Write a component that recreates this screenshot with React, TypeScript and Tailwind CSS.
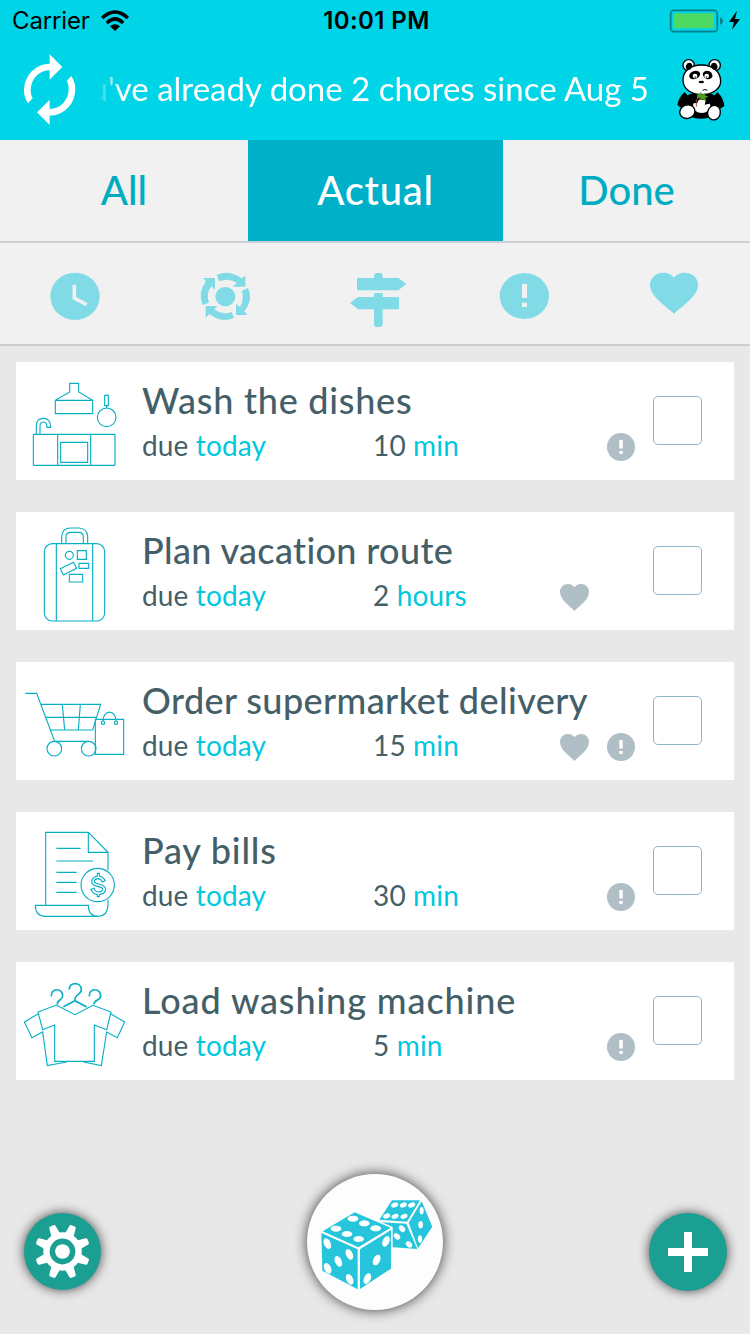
import { useState, ReactNode } from 'react'

interface Chore {
  title: string
  amount: string
  unit: string
  favorite?: boolean
  important?: boolean
  icon: ReactNode
  titleClass: string
}

const KitchenIcon = () => (
  <>
    <path d="M179 85H206V111L248 136V176H136V136L179 111ZM136 136H248" />
    <path d="M284 121H295V152H284ZM290 152V160" />
    <circle cx="290" cy="187" r="28" />
    <path d="M79 238V211Q80 190 100 190Q122 190 122 217H111Q111 201 101 201Q90 201 90 214V238" />
    <rect x="70" y="238" width="245" height="93" rx="2" />
    <path d="M143 238V331M242 238V331M152 262H233V322H152Z" />
  </>
)

const SuitcaseIcon = () => (
  <>
    <path d="M155 116V94Q157 69 182 69H206Q231 70 233 94V116" />
    <path d="M168 116V96Q168 82 182 82H206Q220 82 220 96V116" />
    <rect x="103" y="116" width="181" height="232" rx="24" />
    <path d="M139 116V348M248 116V348" />
    <circle cx="178" cy="151" r="12" />
    <path d="M202 137H229V163H202ZM207 175H236V190H207ZM178 208H218V231H178ZM151 191L190 172L200 190L160 210Z" />
  </>
)

const CartIcon = () => (
  <>
    <path d="M46 115H80L134 259H237M94 148H272L248 225H122M108 187H260M157 148L164 225M211 148L205 225" />
    <circle cx="133" cy="281" r="22" />
    <circle cx="236" cy="281" r="22" />
    <path d="M256 193H341V298H256ZM279 199C279 162 318 162 318 199" />
    <circle cx="279" cy="203" r="5" />
    <circle cx="318" cy="203" r="5" />
  </>
)

const BillIcon = () => (
  <>
    <path d="M107 301V82H235L294 142V196M235 82V142H294M294 284V301Q292 334 264 334H106Q76 334 76 301H235Q235 334 264 334" />
    <path d="M139 130H212M139 168H249M139 202H200M139 232H200M139 262H200" />
    <circle cx="263" cy="240" r="50" />
    <path d="M262 205H268V213Q281 216 286 227L277 231Q273 221 263 221Q253 222 253 229Q253 235 265 237Q287 241 287 254Q286 266 268 269V275H262V269Q248 267 243 254L252 250Q256 261 266 261Q278 260 278 253Q278 246 262 244Q244 240 245 228Q247 216 262 213Z" />
  </>
)

const ClothesIcon = () => (
  <>
    <path strokeWidth="5" d="M124 124C121 98 158 98 158 122C158 137 141 133 142 148" />
    <path strokeWidth="5" d="M178 104C176 80 214 80 214 104C213 122 193 116 195 136M160 155L195 137L230 156" />
    <path strokeWidth="5" d="M238 124C235 98 272 98 272 122C272 137 252 133 252 148" />
    <path d="M139 150L195 179L249 151L303 171L290 224L253 210V319H134V210L98 224L84 171Z" />
    <path d="M84 177L43 201L66 248L98 231L112 332L170 321M303 177L344 201L322 248L290 231L274 332L220 321" />
  </>
)

const chores: Chore[] = [
  { title: 'Wash the dishes', amount: '10', unit: 'min', important: true, icon: <KitchenIcon />, titleClass: 'tracking-[0.75px]' },
  { title: 'Plan vacation route', amount: '2', unit: 'hours', favorite: true, icon: <SuitcaseIcon />, titleClass: 'tracking-[0.35px]' },
  { title: 'Order supermarket delivery', amount: '15', unit: 'min', favorite: true, important: true, icon: <CartIcon />, titleClass: 'tracking-[0.4px]' },
  { title: 'Pay bills', amount: '30', unit: 'min', important: true, icon: <BillIcon />, titleClass: 'tracking-[0.8px]' },
  { title: 'Load washing machine', amount: '5', unit: 'min', important: true, icon: <ClothesIcon />, titleClass: 'tracking-[0.9px]' },
]

const HEART = 'M24 41C16 33 0 24 0 12C0 5 6 0 13 0C18 0 22 2 24 5C26 2 30 0 35 0C42 0 48 5 48 12C48 24 32 33 24 41Z'

function StatusBar() {
  return (
    <div className="flex h-10 items-center justify-between pt-px pl-3 pr-[9px] font-['Inter',sans-serif] text-black">
      <div className="flex w-[200px] items-center gap-[11px]">
        <span className="text-2xl tracking-[-0.15px]">Carrier</span>
        <svg className="h-[21px] w-7" viewBox="0 0 84 63">
          <path d="M0 20Q42-18 84 20L77 28Q42-6 7 28ZM14 35Q42 7 70 35L63 43Q42 22 21 43ZM27 49Q42 37 57 49L42 63Z" />
        </svg>
      </div>
      <span className="text-2xl font-semibold tracking-[0.4px]">10:01 PM</span>
      <div className="flex w-[200px] items-center justify-end">
        <svg className="h-6 w-[72px]" viewBox="507 26 216 72">
          <rect x="512" y="30" width="140" height="64" rx="10" fill="none" stroke="#067f8b" strokeWidth="5" />
          <rect x="521" y="39" width="121" height="45" rx="4" fill="#4cd964" />
          <path d="M660 50Q669 54 669 62Q669 70 660 74Z" fill="#067f8b" />
          <path d="M711 31L687 65H702L696 89L720 56H705Z" />
        </svg>
      </div>
    </div>
  )
}

function Panda() {
  return (
    <svg className="h-16 w-[50px]" viewBox="526 174 150 192">
      <ellipse cx="601" cy="316" rx="60" ry="40" />
      <path d="M552 276Q534 292 530 314Q552 338 582 312ZM650 276Q668 292 671 318Q648 340 620 312Z" />
      <ellipse cx="603" cy="319" rx="26" ry="20" fill="#fff" />
      <path d="M566 290L594 298L590 310L572 308ZM642 290L616 298L612 314L640 308Z" />
      <g stroke="#000" strokeWidth="4" fill="#fff">
        <circle cx="564" cy="196" r="17" />
        <circle cx="642" cy="196" r="17" />
        <path d="M603 195C640 195 660 218 660 244C660 268 633 284 603 284C573 284 547 268 547 240C547 214 568 195 603 195Z" />
        <ellipse cx="560" cy="335" rx="23" ry="20" transform="rotate(-20 560 335)" />
        <ellipse cx="640" cy="338" rx="19" ry="22" transform="rotate(15 640 338)" />
      </g>
      <ellipse cx="565" cy="199" rx="9" ry="11" transform="rotate(25 565 199)" />
      <ellipse cx="641" cy="199" rx="9" ry="11" transform="rotate(-25 641 199)" />
      <ellipse cx="582" cy="225" rx="17" ry="12" transform="rotate(-20 582 225)" />
      <ellipse cx="621" cy="225" rx="15" ry="12" transform="rotate(25 621 225)" />
      <circle cx="583" cy="228" r="7" fill="#fff" />
      <circle cx="618" cy="228" r="7" fill="#fff" />
      <circle cx="584" cy="231" r="2" />
      <circle cx="618" cy="231" r="2" />
      <ellipse cx="602" cy="246" rx="8" ry="4" />
      <path d="M606 271Q613 266 620 271" fill="none" stroke="#000" strokeWidth="3" />
      <path d="M587 320V300L600 288" fill="none" stroke="#a5482d" strokeWidth="3" />
      <path d="M589 286L602 276L605 284L614 278L613 286L624 290L613 294L618 303L604 298L593 302L600 292L589 295Z" fill="#4f9e25" />
    </svg>
  )
}

function Header() {
  return (
    <header className="h-[140px] shrink-0 bg-[#00d4e7]">
      <StatusBar />
      <div className="flex h-[100px] items-center pl-5 pr-6">
        <svg className="h-20 w-[60px] shrink-0" viewBox="60 150 180 240" fill="#fff">
          <path d="M149 163L187 201L149 239V211A57 59 0 0 0 92 270C92 282 94 287 98 295L84 310C75 296 72 284 72 270A77 79 0 0 1 149 191Z" />
          <path d="M149 163L187 201L149 239V211A57 59 0 0 0 92 270C92 282 94 287 98 295L84 310C75 296 72 284 72 270A77 79 0 0 1 149 191Z" transform="rotate(180 149 269)" />
        </svg>
        <div className="ml-2 flex w-[561px] justify-end overflow-hidden pb-0.5 whitespace-nowrap text-[33px] text-white [mask-image:linear-gradient(to_right,transparent_10px,black_34px)]">
          <span>u've already done 2 chores since Aug 5</span>
        </div>
        <div className="ml-auto">
          <Panda />
        </div>
      </div>
    </header>
  )
}

function Tabs() {
  const [active, setActive] = useState('Actual')
  const tabs = ['All', 'Actual', 'Done']

  return (
    <nav className="grid h-[103px] shrink-0 grid-cols-[248px_255px_247px] border-b-2 border-[#c9cfd2] text-[40px] font-medium">
      {tabs.map((tab) => (
        <button
          key={tab}
          onClick={() => setActive(tab)}
          className={`pb-0.5 ${tab === active ? 'bg-[#00afc8] tracking-[0.7px] text-white' : 'text-[#00acc1]'}`}
        >
          {tab}
        </button>
      ))}
    </nav>
  )
}

function Filters() {
  return (
    <div className="grid h-[103px] shrink-0 grid-cols-5 border-b-2 border-[#c9cfd2]">
      <svg className="h-[101px] w-[150px]" viewBox="0 9 450 303" fill="#80dbe7">
        <ellipse cx="225" cy="169" rx="74" ry="71" />
        <path d="M223 134V174L260 194" fill="none" stroke="#f1f1f1" strokeWidth="11" />
      </svg>
      <svg className="h-[101px] w-[150px]" viewBox="450 9 450 303" fill="#80dbe7">
        <ellipse cx="676" cy="170" rx="30" ry="29" />
        <path d="M650 105Q688 88 724 115L736 107V140H698L710 128Q684 113 658 124Z" />
        <path d="M744 144Q761 180 733 214L742 225H708V191L720 202Q734 176 725 153Z" />
        <path d="M702 233Q664 251 629 222L617 233V198H652L643 208Q667 226 695 216Z" />
        <path d="M608 195Q592 159 618 124L609 114H645V149L634 139Q617 161 627 188Z" />
      </svg>
      <svg className="h-[101px] w-[150px]" viewBox="-225 9 450 303" fill="#80dbe7">
        <path d="M-3 114V108Q-3 99 6 99H14Q23 99 23 108V114H70L94 132L70 151H-54V114Z" />
        <path d="M-3 171V159H23V171H72V208H23V252Q23 261 14 261H6Q-3 261-3 252V208H-51L-75 189L-51 171Z" />
      </svg>
      <svg className="h-[101px] w-[150px]" viewBox="225 9 450 303" fill="#80dbe7">
        <ellipse cx="448" cy="168" rx="74" ry="69" />
        <path d="M441 132H456V174H441ZM441 188H456V201H441Z" fill="#f1f1f1" />
      </svg>
      <svg className="h-[101px] w-[150px]" viewBox="675 9 450 303" fill="#80dbe7">
        <path d={HEART} transform="translate(825 98) scale(3)" />
      </svg>
    </div>
  )
}

function ChoreCard({ chore }: { chore: Chore }) {
  const [checked, setChecked] = useState(false)

  return (
    <li className="flex h-[118px] items-center bg-white">
      <svg
        className="h-[118px] w-[126px] shrink-0"
        viewBox="18 21 378 354"
        fill="none"
        stroke="#06afc4"
        strokeWidth="3.4"
      >
        {chore.icon}
      </svg>
      <div className="flex h-full w-[511px] flex-col pt-[15px]">
        <h2 className={`h-[46px] whitespace-nowrap text-[36px] leading-[46px] font-medium text-[#455f69] ${chore.titleClass}`}>
          {chore.title}
        </h2>
        <div className="flex h-11 items-center text-[28px] tracking-[0.15px] text-[#455f69]">
          <div className="w-[231px]">
            due <span className="text-[#00c8de]">today</span>
          </div>
          <div>
            {chore.amount} <span className="text-[#00c8de]">{chore.unit}</span>
          </div>
          <div className="mt-1 ml-auto mr-[18px] flex items-center gap-[17px]">
            {chore.favorite && (
              <svg className="mr-px h-[27px] w-[29px]" viewBox="0 0 48 41" preserveAspectRatio="none" fill="#b0bec5">
                <path d={HEART} />
              </svg>
            )}
            {chore.important ? (
              <svg className="h-7 w-7" viewBox="0 0 28 28">
                <circle cx="14" cy="14" r="14" fill="#b0bec5" />
                <path d="M12.3 7H15.7V15.5H12.3ZM12.3 18H15.7V21H12.3Z" fill="#fff" />
              </svg>
            ) : (
              <span className="w-7" />
            )}
          </div>
        </div>
      </div>
      <button
        onClick={() => setChecked(!checked)}
        aria-label={chore.title}
        className={`mb-px h-[49px] w-[49px] rounded-[5px] border border-[#8eb6ca] ${checked ? 'bg-[#80dbe7]' : ''}`}
      />
    </li>
  )
}

function Dice() {
  return (
    <svg className="h-[136px] w-[136px]" viewBox="51 41 408 408" fill="#26c5db">
      <path d="M306 120H390L351 184L268 178ZM395 123L427 199L384 264L356 187ZM273 186L349 190L382 266L300 260Z" />
      <g fill="#fdfdfd">
        <ellipse cx="314" cy="134" rx="11" ry="7" transform="rotate(-20 314 134)" />
        <ellipse cx="340" cy="134" rx="11" ry="7" transform="rotate(-20 340 134)" />
        <ellipse cx="365" cy="134" rx="11" ry="7" transform="rotate(-20 365 134)" />
        <ellipse cx="290" cy="167" rx="11" ry="7" transform="rotate(-20 290 167)" />
        <ellipse cx="315" cy="168" rx="11" ry="7" transform="rotate(-20 315 168)" />
        <ellipse cx="342" cy="168" rx="11" ry="7" transform="rotate(-20 342 168)" />
        <ellipse cx="395" cy="151" rx="6" ry="11" />
        <ellipse cx="392" cy="193" rx="7" ry="11" />
        <ellipse cx="390" cy="236" rx="6" ry="11" />
        <ellipse cx="336" cy="205" rx="8" ry="11" transform="rotate(-40 336 205)" />
        <ellipse cx="321" cy="228" rx="8" ry="11" transform="rotate(-45 321 228)" />
        <ellipse cx="357" cy="252" rx="8" ry="11" transform="rotate(-45 357 252)" />
        <path d="M194 150L308 200V334L206 396L90 334V212Z" />
      </g>
      <path d="M194 156L302 202L205 261L98 213ZM94 218L203 267V387L97 331ZM210 267L303 209V325L210 386Z" />
      <g fill="#fff">
        <ellipse cx="189" cy="175" rx="16" ry="9" />
        <ellipse cx="223" cy="189" rx="16" ry="9" />
        <ellipse cx="257" cy="204" rx="16" ry="9" />
        <ellipse cx="138" cy="205" rx="16" ry="9" />
        <ellipse cx="171" cy="221" rx="16" ry="9" />
        <ellipse cx="206" cy="236" rx="16" ry="9" />
        <ellipse cx="112" cy="250" rx="10" ry="17" transform="rotate(-25 112 250)" />
        <ellipse cx="178" cy="282" rx="10" ry="17" transform="rotate(-25 178 282)" />
        <ellipse cx="145" cy="303" rx="10" ry="17" transform="rotate(-25 145 303)" />
        <ellipse cx="113" cy="324" rx="10" ry="17" transform="rotate(-25 113 324)" />
        <ellipse cx="179" cy="357" rx="10" ry="17" transform="rotate(-25 179 357)" />
        <ellipse cx="288" cy="243" rx="10" ry="17" transform="rotate(25 288 243)" />
        <ellipse cx="260" cy="299" rx="10" ry="17" transform="rotate(25 260 299)" />
        <ellipse cx="232" cy="355" rx="10" ry="17" transform="rotate(25 232 355)" />
      </g>
    </svg>
  )
}

function Footer() {
  const teeth = [22.5, 67.5, 112.5, 157.5, 202.5, 247.5, 292.5, 337.5]

  return (
    <footer className="mt-auto flex items-end justify-between pb-6 pl-6 pr-[23px]">
      <button aria-label="Settings" className="mb-5 h-[77px] w-[77px] rounded-full bg-[#1a9f92] shadow-[0_0_12px_rgba(0,0,0,0.7)]">
        <svg className="h-[77px] w-[77px]" viewBox="-115 -115 230 230" fill="#fff">
          {teeth.map((angle) => (
            <path key={angle} d="M-15-44L-10-79Q-9-83-5-83H5Q9-83 10-79L15-44Z" transform={`rotate(${angle})`} />
          ))}
          <circle r="48" fill="none" stroke="#fff" strokeWidth="19" />
          <circle r="22" />
        </svg>
      </button>
      <button aria-label="Roll the dice" className="h-[136px] w-[136px] rounded-full bg-[#fdfdfd] shadow-[0_0_13px_rgba(0,0,0,0.75)]">
        <Dice />
      </button>
      <button aria-label="Add chore" className="mb-[19px] h-[78px] w-[78px] rounded-full bg-[#1a9f92] shadow-[0_0_12px_rgba(0,0,0,0.7)]">
        <svg className="h-[78px] w-[78px]" viewBox="0 0 78 78">
          <path d="M39 19V59M19 39H59" stroke="#fff" strokeWidth="8" />
        </svg>
      </button>
    </footer>
  )
}

export default function App() {
  return (
    <div className="flex h-[1334px] w-[750px] flex-col overflow-hidden bg-[#f1f1f1] font-['Lato',sans-serif]">
      <Header />
      <Tabs />
      <Filters />
      <main className="flex flex-1 flex-col bg-[#e8e8e8]">
        <ul className="flex flex-col gap-8 px-4 pt-4">
          {chores.map((chore) => (
            <ChoreCard key={chore.title} chore={chore} />
          ))}
        </ul>
        <Footer />
      </main>
    </div>
  )
}
